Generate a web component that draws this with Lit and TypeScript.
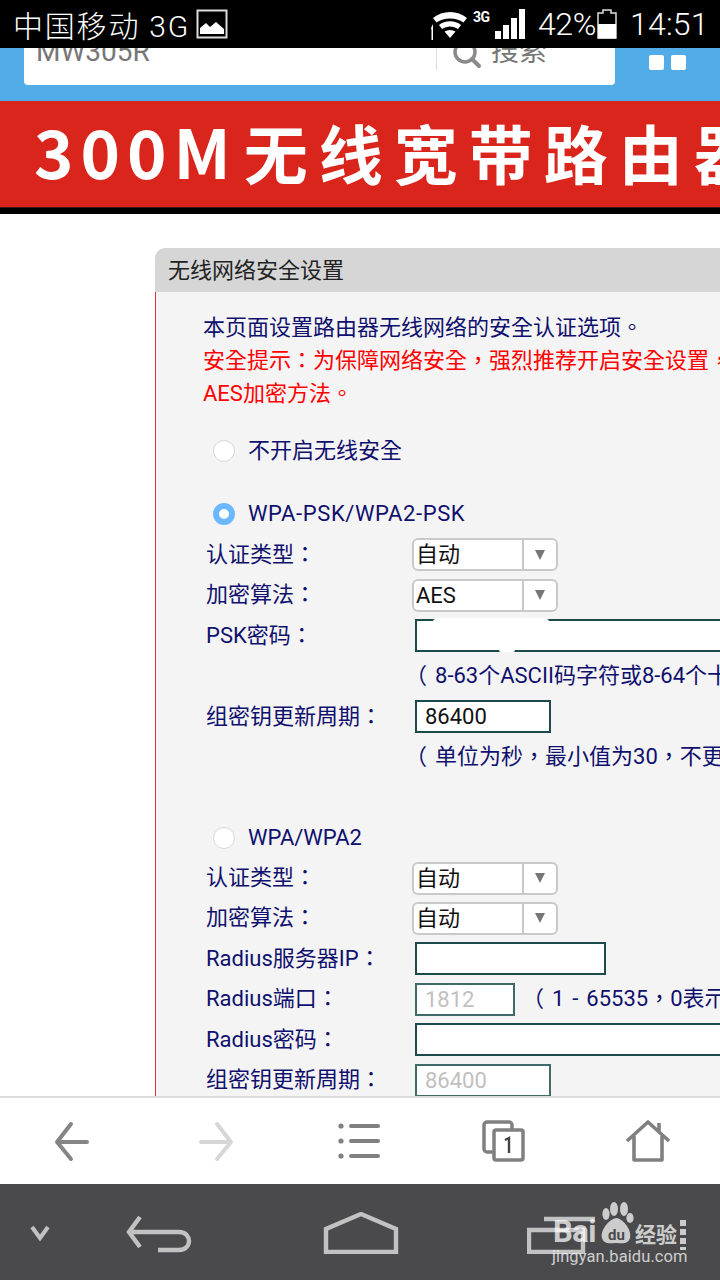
import { LitElement, html, css, svg } from "lit";
import { customElement } from "lit/decorators.js";

const selectRow = (label: string, value: string, cls = "") => html`
  <div class="row">
    <span class="label">${label}</span>
    <div class="select ${cls}"><span class="sel-val">${value}</span><span class="sel-btn"><i class="tri"></i></span></div>
  </div>`;

const inputRow = (label: string, cls: string, value = "", hint = "") => html`
  <div class="row">
    <span class="label">${label}</span>
    <div class="input ${cls}">${value}</div>
    ${hint ? html`<span class="side-hint"><span class="par">（</span>${hint}</span>` : ""}
  </div>`;

@customElement("app-root")
export class AppRoot extends LitElement {
  static styles = css`
    :host { display: block; width: 720px; height: 1280px; overflow: hidden; background: #fff;
      font-family: Roboto, "Noto Sans CJK TC", sans-serif; }
    .page { display: flex; flex-direction: column; height: 1280px; width: 720px; overflow: hidden; }

    .status { height: 48px; flex: none; background: #000; color: #fff; display: flex; align-items: center; font-size: 31px; }
    .carrier { margin-left: 13px; width: 175px; white-space: nowrap; font-family: Roboto, "Noto Sans CJK SC", sans-serif; font-weight: 300; font-size: 30px; letter-spacing: 1.8px; }
    .pic { margin-left: 8px; width: 32px; height: 30px; display: block; }
    .wifi { margin-left: 201px; width: 42px; height: 36px; display: block; }
    .g3 { width: 18px; margin-left: 2px; font-size: 14px; font-weight: 700; align-self: flex-start; margin-top: 9px; letter-spacing: -.5px; }
    .bars { margin-left: 4px; width: 30px; height: 30px; display: block; }
    .pct { margin-left: 13px; font-weight: 300; font-size: 32px; width: 59px; letter-spacing: -.4px; white-space: nowrap; }
    .batt { width: 20px; height: 30px; display: block; }
    .time { margin-left: 13px; font-weight: 300; font-size: 32px; white-space: nowrap; letter-spacing: .2px; }

    .head { height: 53px; flex: none; background: #51ace8; display: flex; overflow: hidden; align-items: flex-start; }
    .search { width: 591px; flex: none; height: 37px; margin-left: 24px; background: #fff; border-radius: 0 0 4px 4px; display: flex; overflow: hidden; color: #777; font-size: 28px; font-family: Roboto, "Noto Sans CJK SC", sans-serif; }
    .q { width: 412px; flex: none; box-sizing: border-box; padding-left: 12px; margin-top: -12px; line-height: 32px; white-space: nowrap; }
    .sbtn { flex: 1; height: 22px; border-left: 1px solid #ddd; display: flex; align-items: flex-start; }
    .mag { margin-left: 15px; margin-top: -9px; width: 30px; height: 30px; display: block; }
    .sbtn span { margin-left: 9px; margin-top: -12px; line-height: 32px; white-space: nowrap; }
    .menu { margin-left: 34px; margin-top: 7px; display: flex; gap: 7px; }
    .menu i { display: block; width: 15px; height: 15px; border-radius: 2px; background: #fff; }

    .banner { height: 107px; flex: none; background: #d9251c; border-bottom: 1px solid #3a1a18; box-sizing: border-box; color: #fff; white-space: nowrap; overflow: hidden; padding-left: 34px;
      font-family: "Noto Sans CJK SC", sans-serif; font-weight: 700; font-size: 64px; letter-spacing: 11px; line-height: 97px; }
    .banner span { font-size: 67px; letter-spacing: 7px; margin-right: 6px; }
    .rule { height: 6px; flex: none; background: #000; }

    .main { flex: 1; min-height: 0; overflow: hidden; padding: 34px 0 0 155px; }
    .panel { width: 700px; }
    .ptitle { height: 44px; background: #d6d6d6; border-radius: 10px 0 0 0; font-size: 22px; line-height: 40px; color: #222; padding-left: 13px; font-family: "Noto Sans CJK SC", sans-serif; }
    .pbody { background: #f4f4f4; border-left: 1px solid #d03a3a; height: 900px; color: #10106e; font-size: 22px; white-space: nowrap; box-sizing: border-box; padding-top: 19px; }
    .intro { padding-left: 47px; line-height: 33px; }
    .warn { color: #f00; }

    .row { height: 40.4px; display: flex; align-items: center; padding-left: 50px; line-height: 34px; position: relative; }
    .rrow { padding-left: 57px; }
    .gap1 { margin-top: 21px; }
    .gap2 { margin-top: 22px; }
    .nudge { height: 1px; }
    .spacer { height: 40.4px; }
    .radio { width: 22px; height: 22px; box-sizing: border-box; border: 1px solid #d8d8d8; border-radius: 50%; background: #fff; margin-right: 13px; flex: none; }
    .radio.on { border: 6px solid #6ab8ff; }
    .wide { letter-spacing: .6px; }
    .label { width: 206px; flex: none; }

    .select { width: 146px; height: 33px; box-sizing: border-box; border: 2px solid #c9c9c9; border-radius: 6px; background: #fff; display: flex; color: #111; flex: none; }
    .sel-val { width: 110px; padding-left: 2px; line-height: 30px; box-sizing: border-box; border-right: 2px solid #c9c9c9; }
    .sel-btn { flex: 1; display: flex; align-items: center; justify-content: center; }
    .tri { display: block; width: 0; height: 0; border-left: 5.5px solid transparent; border-right: 5.5px solid transparent; border-top: 10px solid #777; }

    .input { margin-left: 3px; height: 33px; box-sizing: border-box; border: 2px solid #1d4a4a; background: #fff; color: #111; padding-left: 8px; line-height: 30px; flex: none; position: relative; }
    .w136 { width: 136px; } .w191 { width: 191px; } .w100 { width: 100px; } .wfull { width: 420px; }
    .dis { color: #c0c0c0; border-color: #3f6a68; }
    .smudge { position: absolute; left: 15px; top: -3px; width: 118px; height: 12px; background: #fff; border-radius: 6px; }
    .smudge2 { position: absolute; left: 82px; bottom: -2px; width: 16px; height: 4px; background: #fff; border-radius: 2px; }
    .side-hint { margin-left: 17px; word-spacing: 2.5px; }
    .hint { padding-left: 209px; }
    .par { margin-left: -10px; margin-right: 8px; }

    .bar { height: 88px; flex: none; background: #fff; border-top: 2px solid #dcdcdc; box-sizing: border-box; display: grid; grid-template-columns: repeat(5, 144px); align-items: center; justify-items: center; }
    .bar svg { display: block; width: 48px; height: 48px; }

    .nav { height: 96px; flex: none; background: #4a4a4c; position: relative; display: flex; }
    .nav svg { display: block; }
    .chev { margin-left: 28px; margin-top: 40px; width: 24px; height: 18px; }
    .nback { margin-left: 73px; margin-top: 30px; width: 70px; height: 40px; }
    .nhome { margin-left: 128px; margin-top: 28px; width: 76px; height: 42px; }
    .nrec { margin-left: 128px; margin-top: 32px; width: 72px; height: 38px; }

    .mark { position: absolute; left: 552px; top: 18px; width: 140px; height: 66px; color: #fff; opacity: .72; }
    .mark .bai { position: absolute; left: 1px; top: 15px; font: 700 31px/30px Roboto, sans-serif; letter-spacing: -.5px; }
    .mark .du { position: absolute; left: 56px; top: 24px; font: 700 15px/18px Roboto, sans-serif; color: #4a4a4c; }
    .mark .paw { position: absolute; left: 45px; top: 0; width: 38px; height: 44px; }
    .mark .jy { position: absolute; left: 83px; top: 19px; font: 700 21px/24px "Noto Sans CJK SC", sans-serif; white-space: nowrap; }
    .mark .dots { position: absolute; left: 128px; top: 18px; width: 6px; height: 30px; background: repeating-linear-gradient(#fff 0 6px, transparent 6px 9px); }
    .mark .url { position: absolute; left: 0; top: 45px; font: 400 16.5px/20px Roboto, sans-serif; white-space: nowrap; letter-spacing: .1px; }
  `;

  render() {
    const line = (d: string, c: string) => svg`<path d=${d} fill="none" stroke=${c} stroke-width="4" stroke-linecap="round" stroke-linejoin="round"/>`;
    return html`<div class="page">
      <div class="status">
        <span class="carrier">中国移动 3G</span>
        <svg class="pic" viewBox="0 0 32 30"><rect x="1.5" y="1.5" width="29" height="27" fill="none" stroke="#ddd" stroke-width="2"/><path d="M4 25V19L10 14L14 18L20 13L28 20V25Z" fill="#fff"/></svg>
        <svg class="wifi" viewBox="0 0 40 36"><path d="M3 12C12 4 28 4 37 12L33.5 16.5C26 11 14 11 6.5 16.5Z" fill="#fff"/><path d="M9 19C15 14 25 14 31 19L28 23C23 19.5 17 19.5 12 23Z" fill="#fff"/><path d="M14.5 25.5C18 23.5 22 23.5 25.5 25.5L20 32Z" fill="#fff"/><path d="M1 22L3 18L3 34H1.5V24Z" fill="#fff"/></svg>
        <span class="g3">3G</span>
        <svg class="bars" viewBox="0 0 30 30"><path d="M0 22H6V30H0ZM8 16H14V30H8ZM16 9H22V30H16ZM24 0H30V30H24Z" fill="#fff" /></svg>
        <span class="pct">42%</span>
        <svg class="batt" viewBox="0 0 20 30"><path d="M6 1H14V4H19V29H1V4H6Z" fill="none" stroke="#ddd" stroke-width="1.5"/><rect x="1" y="15" width="18" height="14.5" fill="#fff"/></svg>
        <span class="time">14:51</span>
      </div>

      <div class="head">
        <div class="search">
          <div class="q">MW305R</div>
          <div class="sbtn">
            <svg class="mag" viewBox="0 0 30 30"><circle cx="13" cy="13" r="10" fill="none" stroke="#8a8a8a" stroke-width="3.5"/><path d="M20 20L27 27" stroke="#8a8a8a" stroke-width="4" stroke-linecap="round"/></svg>
            <span>搜索</span>
          </div>
        </div>
        <div class="menu"><i></i><i></i></div>
      </div>

      <div class="banner"><span>300M</span>无线宽带路由器</div>
      <div class="rule"></div>

      <div class="main">
        <div class="panel">
          <div class="ptitle">无线网络安全设置</div>
          <div class="pbody">
            <div class="intro">
              <div>本页面设置路由器无线网络的安全认证选项。</div>
              <div class="warn">安全提示：为保障网络安全，强烈推荐开启安全设置，并使用WPA-PSK/WPA2-PSK</div>
              <div class="warn">AES加密方法。</div>
            </div>
            <div class="row rrow gap1"><span class="radio"></span>不开启无线安全</div>
            <div class="row rrow gap2"><span class="radio on"></span><span class="wide">WPA-PSK/WPA2-PSK</span></div>
            <div class="nudge"></div>
            ${selectRow("认证类型：", "自动")}
            ${selectRow("加密算法：", "AES")}
            <div class="row"><span class="label">PSK密码：</span><div class="input wfull"><span class="smudge"></span><span class="smudge2"></span></div></div>
            <div class="row"><span class="hint"><span class="par">（</span>8-63个ASCII码字符或8-64个十六进制字符）</span></div>
            ${inputRow("组密钥更新周期：", "w136", "86400")}
            <div class="row"><span class="hint"><span class="par">（</span>单位为秒，最小值为30，不更新则为0）</span></div>
            <div class="spacer"></div>
            <div class="row rrow"><span class="radio"></span>WPA/WPA2</div>
            ${selectRow("认证类型：", "自动")}
            ${selectRow("加密算法：", "自动")}
            ${inputRow("Radius服务器IP：", "w191")}
            ${inputRow("Radius端口：", "w100 dis", "1812", "1 - 65535，0表示默认端口1812）")}
            ${inputRow("Radius密码：", "wfull")}
            ${inputRow("组密钥更新周期：", "w136 dis", "86400")}
          </div>
        </div>
      </div>

      <div class="bar">
        <svg viewBox="0 0 48 48">${line("M23 7L9 25L23 42M10 25H39", "#858585")}</svg>
        <svg viewBox="0 0 48 48">${line("M25 7L39 25L25 42M9 25H38", "#d6d6d6")}</svg>
        <svg viewBox="0 0 48 48">${line("M15 9H42M15 24H42M15 39H42", "#808080")}<circle cx="5" cy="9" r="2.6" fill="#808080"/><circle cx="5" cy="24" r="2.6" fill="#808080"/><circle cx="5" cy="39" r="2.6" fill="#808080"/></svg>
        <svg viewBox="0 0 48 48"><path d="M13 35H7A3 3 0 0 1 4 32V8A3 3 0 0 1 7 5H29A3 3 0 0 1 32 8V12" fill="none" stroke="#808080" stroke-width="3.5"/><rect x="14" y="13" width="29" height="30" rx="2" fill="#fff" stroke="#808080" stroke-width="3.5"/><path d="M25 23L29 21V36" fill="none" stroke="#444" stroke-width="2.4"/></svg>
        <svg viewBox="0 0 48 48"><path d="M3 24L24 5L45 24M10 19V43H38V19M35 15V6" fill="none" stroke="#808080" stroke-width="3.6" stroke-linejoin="round"/></svg>
      </div>

      <div class="nav">
        <svg class="chev" viewBox="0 0 24 18"><path d="M4 3L12 14L20 3" fill="none" stroke="#c2c2c2" stroke-width="4"/></svg>
        <svg class="nback" viewBox="0 0 70 40"><path d="M15 3L4 18L15 33M5 18H54C61 18 64 23 64 27C64 32 60 36 54 36H33" fill="none" stroke="#c2c2c2" stroke-width="4.4"/></svg>
        <svg class="nhome" viewBox="0 0 76 42"><path d="M3 40V17L38 2L73 17V40Z" fill="none" stroke="#c2c2c2" stroke-width="4.4"/></svg>
        <svg class="nrec" viewBox="0 0 72 38"><path d="M2 14H56V36H2Z" fill="none" stroke="#c2c2c2" stroke-width="4.4"/><path d="M17 3H68" stroke="#c2c2c2" stroke-width="4.4"/></svg>
        <div class="mark">
          <span class="bai">Bai</span>
          <svg class="paw" viewBox="0 0 38 44"><ellipse cx="9" cy="12" rx="3.6" ry="6" fill="#fff"/><ellipse cx="17" cy="7" rx="4" ry="7" fill="#fff"/><ellipse cx="27" cy="7" rx="4" ry="7" fill="#fff"/><ellipse cx="33" cy="16" rx="3.6" ry="5" fill="#fff"/><path d="M20 16C27 18 35 28 33 36C31 43 24 41 19 41C14 41 7 43 5 36C3 28 13 16 20 16Z" fill="#fff"/></svg>
          <span class="du">du</span>
          <span class="jy">经验</span>
          <span class="dots"></span>
          <span class="url">jingyan.baidu.com</span>
        </div>
      </div>
    </div>`;
  }
}
